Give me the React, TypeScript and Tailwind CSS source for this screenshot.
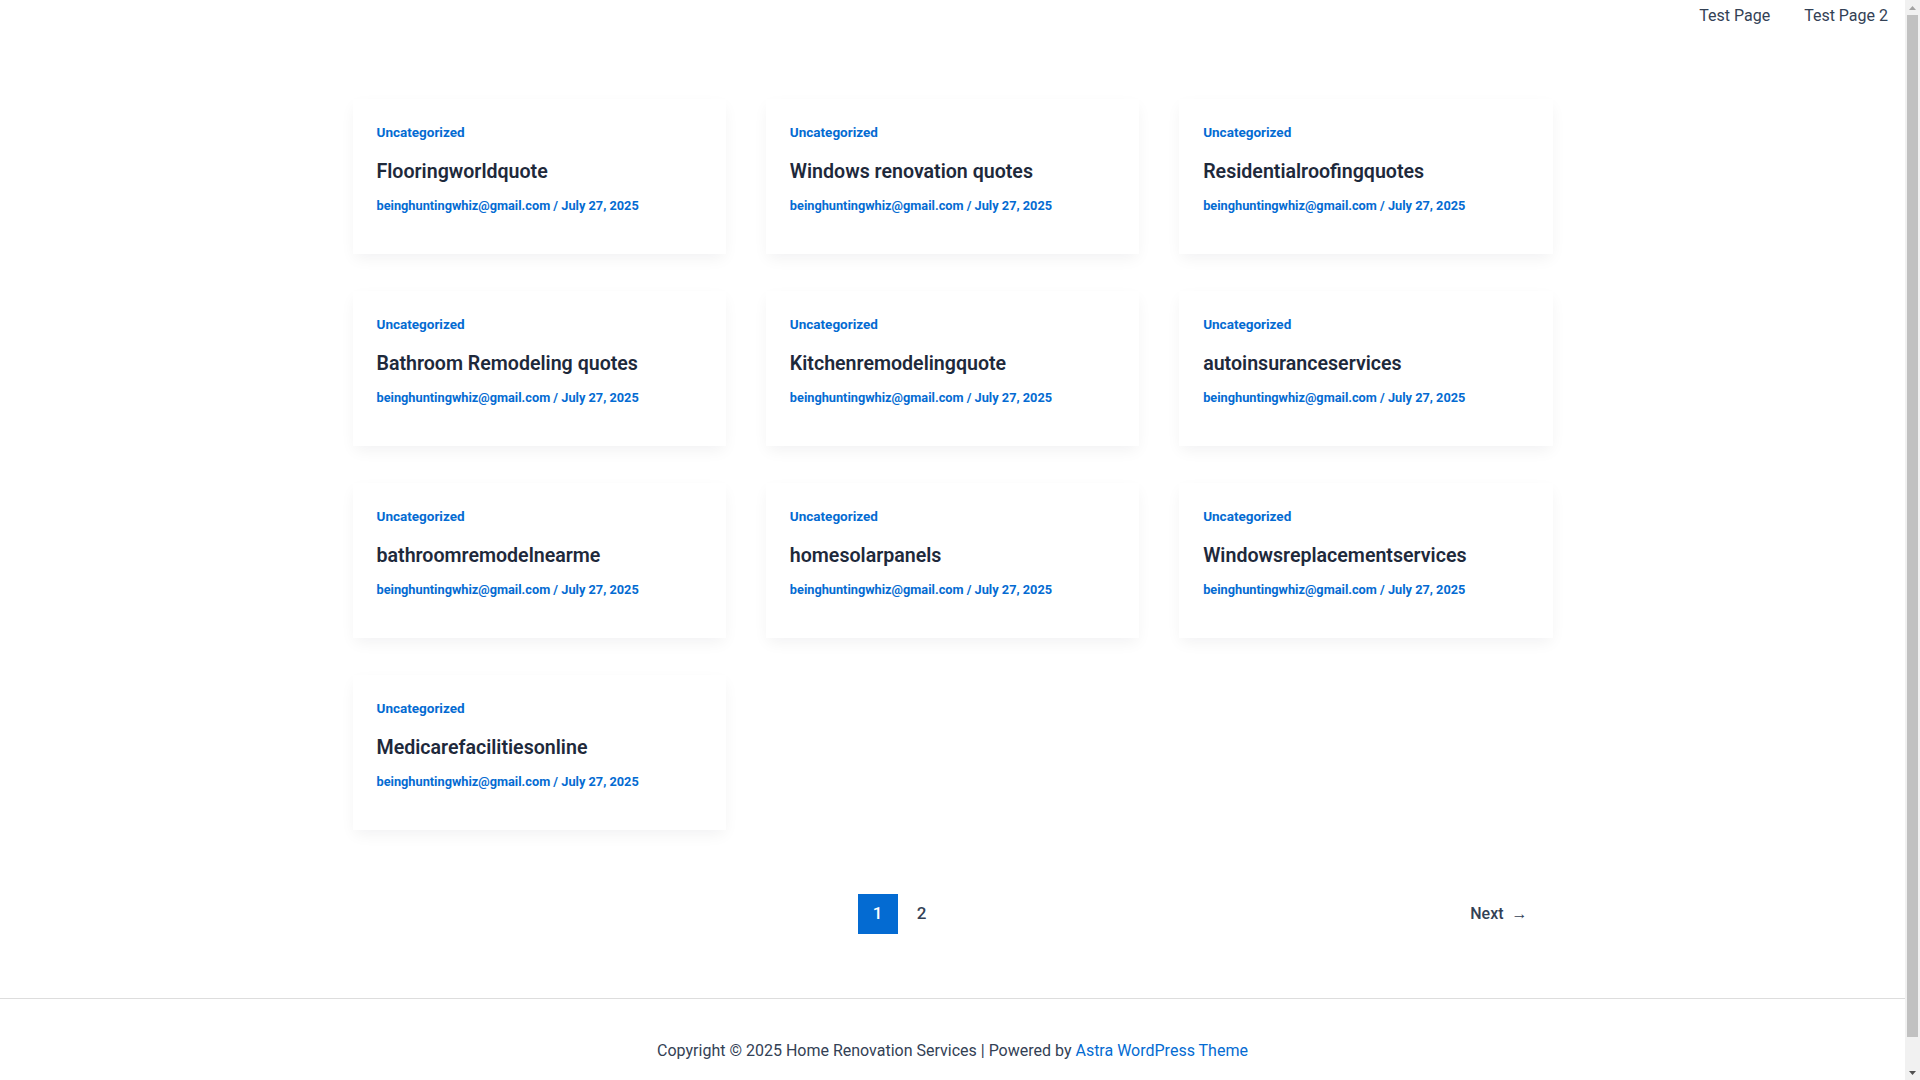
const posts = [
  "Flooringworldquote",
  "Windows renovation quotes",
  "Residentialroofingquotes",
  "Bathroom Remodeling quotes",
  "Kitchenremodelingquote",
  "autoinsuranceservices",
  "bathroomremodelnearme",
  "homesolarpanels",
  "Windowsreplacementservices",
  "Medicarefacilitiesonline",
];

function PostCard({ title }: { title: string }) {
  return (
    <article className="h-[155px] bg-white px-6 pt-[23px] shadow-[0px_6px_15px_-2px_rgba(16,24,40,0.06)]">
      <a href="#" className="block text-[13.5px] font-bold leading-5 text-[#046bd2]">
        Uncategorized
      </a>
      <h2 className="mt-[17px] text-[19.6px] font-semibold leading-[26px] text-[#1e293b]">
        <a href="#">{title}</a>
      </h2>
      <p className="mt-[11px] text-[12.75px] font-bold leading-5 text-[#046bd2]">
        <a href="#">beinghuntingwhiz@gmail.com</a> / July 27, 2025
      </p>
    </article>
  );
}

// drawn stand-in for the browser's classic scrollbar
function Scrollbar() {
  return (
    <div className="flex h-full w-[15px] shrink-0 flex-col bg-[#f1f1f1]">
      <div className="flex h-[15px] items-center justify-center">
        <svg width="7" height="4" viewBox="0 0 7 4">
          <path d="M0 4 L3.5 0 L7 4 Z" fill="#a3a3a3" />
        </svg>
      </div>
      <div className="mx-[2px] h-[1022px] bg-[#c1c1c1]" />
      <div className="mt-auto flex h-[15px] items-center justify-center">
        <svg width="7" height="4" viewBox="0 0 7 4">
          <path d="M0 0 L3.5 4 L7 0 Z" fill="#505050" />
        </svg>
      </div>
    </div>
  );
}

export default function App() {
  return (
    <div className="flex h-screen overflow-hidden bg-white font-['Roboto',sans-serif] text-[#334155]">
      <div className="min-w-0 flex-1">
        <header className="flex h-[31px] items-center justify-end pt-px">
          <nav className="flex text-[16px]">
            <a href="#" className="px-[17px]">Test Page</a>
            <a href="#" className="px-[17px]">Test Page 2</a>
          </nav>
        </header>

        <main className="mx-auto w-[1200px] pt-[68px]">
          <div className="grid grid-cols-3 gap-x-10 gap-y-[37px]">
            {posts.map((p) => (
              <PostCard key={p} title={p} />
            ))}
          </div>

          <nav className="mt-16 flex h-10 items-center">
            <div className="ml-[505px] flex gap-1">
              <span className="flex h-10 w-10 items-center justify-center bg-[#046bd2] text-[17px] font-medium text-white">1</span>
              <a href="#" className="flex h-10 w-10 items-center justify-center text-[17px] font-medium">2</a>
            </div>
            <a href="#" className="ml-auto pr-[25px] text-[16px] font-medium">
              Next <span className="ml-1">→</span>
            </a>
          </nav>
        </main>

        <footer className="mt-16 border-t border-[#dddddd] pb-[55px] pt-[40px] text-center text-[16px]">
          Copyright © 2025 Home Renovation Services | Powered by{" "}
          <a href="#" className="text-[#046bd2]">Astra WordPress Theme</a>
        </footer>
      </div>
      <Scrollbar />
    </div>
  );
}
